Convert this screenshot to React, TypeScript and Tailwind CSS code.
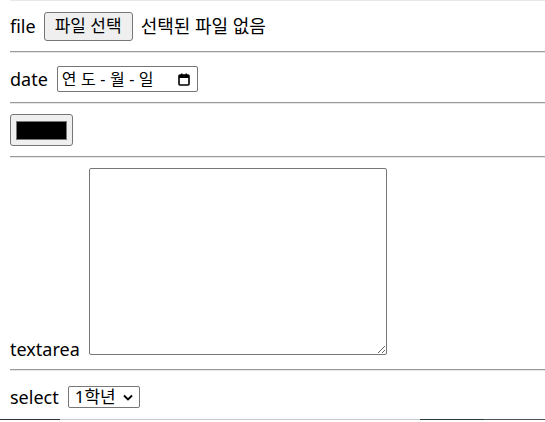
import React from "react"

const font = { fontFamily: '"Noto Sans", "Noto Sans CJK KR", sans-serif' }

// gray inset rule between the form rows
const Rule = () => <div className="h-[2px] border-t border-t-[#9a9a9a] border-b border-b-[#e6e6e6]" />

const CalendarIcon = () => (
  <svg width="12" height="13" viewBox="0 0 12 13" className="shrink-0">
    <rect x="1" y="2" width="10" height="10" rx="1" fill="none" stroke="#000" strokeWidth="1.6" />
    <rect x="1" y="2" width="10" height="3" fill="#000" />
    <rect x="3" y="0.5" width="1.5" height="2.5" fill="#000" />
    <rect x="7.5" y="0.5" width="1.5" height="2.5" fill="#000" />
  </svg>
)

const Chevron = () => (
  <svg width="10" height="7" viewBox="0 0 10 7" className="shrink-0">
    <path d="M1 1.5 L5 5.5 L9 1.5" fill="none" stroke="#000" strokeWidth="1.8" />
  </svg>
)

export default function App() {
  return (
    <div className="w-[545px] h-[422px] bg-white text-black text-[18px] overflow-hidden" style={font}>
      <div className="ml-[10px]">
        <div className="h-px bg-[#e8e8e8]" />

        {/* file */}
        <div className="h-[50px] flex items-center">
          <span>file</span>
          <button className="ml-[8px] w-[89px] h-[29px] bg-[#efefef] border border-[#767676] rounded-[3px] flex items-center justify-center text-[17px]">
            파일 선택
          </button>
          <span className="ml-[8px]">선택된 파일 없음</span>
        </div>
        <Rule />

        {/* date */}
        <div className="h-[49px] flex items-start pt-[13px]">
          <span className="leading-[26px]">date</span>
          <div className="ml-[9px] w-[141px] h-[26px] border border-[#767676] rounded-[2px] flex items-center pl-[4px] pr-[7px]">
            <span className="tracking-[4.5px] text-[16px]">연도-월-일</span>
            <span className="flex-1" />
            <CalendarIcon />
          </div>
        </div>
        <Rule />

        {/* color */}
        <div className="h-[52px] pt-[10px]">
          <button className="w-[63px] h-[32px] bg-[#efefef] border border-[#767676] rounded-[3px] flex items-center justify-center">
            <span className="block w-[51px] h-[19px] bg-black border border-[#777]" />
          </button>
        </div>
        <Rule />

        {/* textarea */}
        <div className="h-[211px] pt-[10px] flex items-end pb-[14px]">
          <span className="leading-none mb-[-3px]">textarea</span>
          <textarea className="ml-[9px] w-[298px] h-[187px] border border-[#767676] rounded-[2px] resize" />
        </div>
        <Rule />

        {/* select */}
        <div className="h-[48px] flex items-start pt-[15px]">
          <span className="leading-[22px]">select</span>
          <div className="ml-[9px] w-[72px] h-[22px] border border-[#767676] rounded-[2px] flex items-center pl-[6px] pr-[6px] text-[17px]">
            <span>1학년</span>
            <span className="flex-1" />
            <Chevron />
          </div>
        </div>
      </div>
      <div className="flex h-px">
        <div className="w-[60px] bg-[#333]" />
        <div className="w-[360px] bg-[#ccc]" />
        <div className="w-[64px] bg-[#2b3a3a]" />
        <div className="flex-1 bg-[#555]" />
      </div>
    </div>
  )
}
